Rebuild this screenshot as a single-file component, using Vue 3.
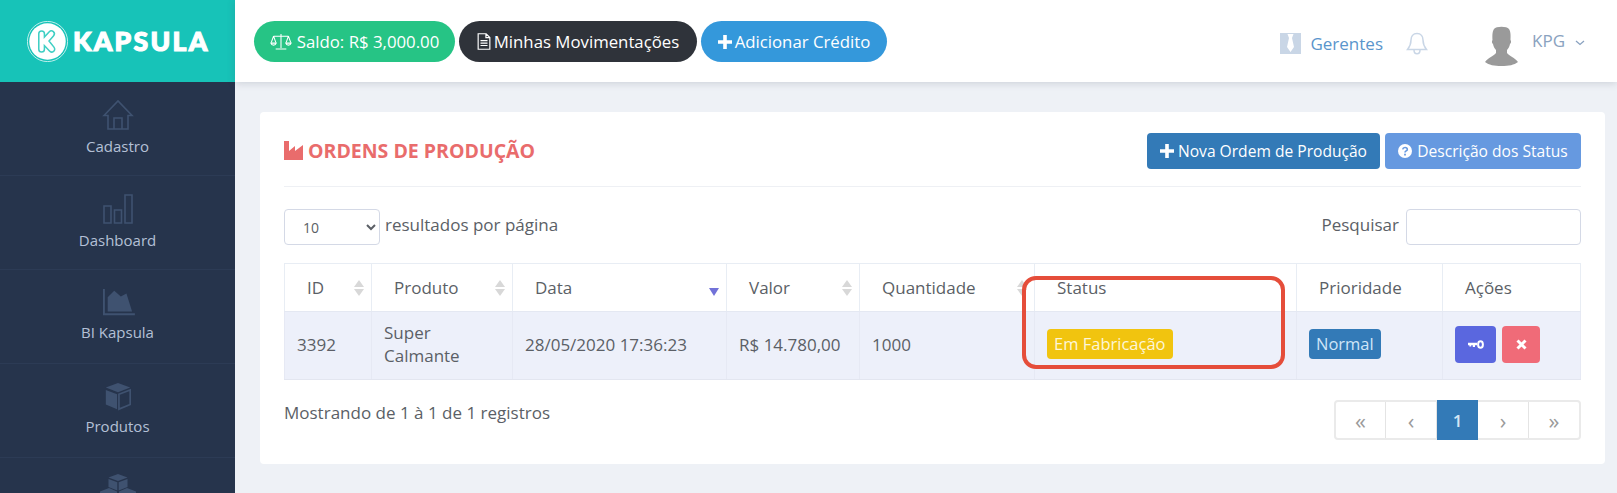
<template>
  <div class="layout">
    <aside class="sidebar">
      <div class="brand">
        <svg class="brand-mark" viewBox="0 0 40 40">
          <circle cx="20" cy="20" r="19.600" fill="none" stroke="#fff" stroke-width="0.700" />
          <circle cx="20" cy="20" r="17.800" fill="#fff" />
          <path d="M11.500 12.500c0-3.600 5.500-3.600 5.500 0v3.200l4.500-5c2.800-2.800 7 .8 4.300 3.900L21.500 19.500l4.800 6c2.500 3.200-2 6.500-4.600 3.600L17 24v3.500c0 3.600-5.500 3.600-5.500 0z" fill="#fff" stroke="#3fcfc4" stroke-width="1.500" />
        </svg>
        <span class="brand-name">KAPSULA</span>
      </div>
      <nav class="menu">
        <a v-for="item in menu" :key="item.key" class="menu-item">
          <svg class="menu-icon" viewBox="0 0 32 32" :style="{ height: item.size + 'px' }" v-html="item.icon"></svg>
          <span v-if="item.label">{{ item.label }}</span>
        </a>
      </nav>
    </aside>

    <div class="main">
      <header class="topbar">
        <div class="pills">
          <a class="pill pill-green">
            <svg class="ico-scale" viewBox="0 0 20 16" fill="none" stroke="#fff" stroke-width="1">
              <path d="M10 1v13M5 15h10M3 3h14M3 3L.8 9M3 3l2.200 6M17 3l-2.200 6M17 3l2.200 6" />
              <path d="M.5 9.500a2.600 2.600 0 0 0 5 0zM14.500 9.500a2.600 2.600 0 0 0 5 0z" />
            </svg>
            Saldo: R$ 3,000.00
          </a>
          <a class="pill pill-dark">
            <svg class="ico-file" viewBox="0 0 13 16" fill="none" stroke="#fff" stroke-width="1.100">
              <path d="M1 .7h7.500L12 4.200v11.100H1zM8.300 .8v3.600H12M3.200 7.200h6.600M3.200 9.500h6.600M3.200 11.800h6.600" />
            </svg>
            Minhas Movimentações
          </a>
          <a class="pill pill-blue">
            <svg class="ico-plus" viewBox="0 0 14 14"><path d="M5.200 0h3.600v5.200H14v3.600H8.800V14H5.200V8.800H0V5.200h5.200z" fill="#fff" /></svg>
            Adicionar Crédito
          </a>
        </div>
        <div class="top-right">
          <a class="managers">
            <svg class="ico-tie" viewBox="0 0 21 21">
              <rect width="21" height="21" fill="#c9d6e6" />
              <path d="M7.500 1h6l-1.500 4 2 9-3.500 5L7 14l2-9z" fill="#fff" />
            </svg>
            Gerentes
          </a>
          <svg class="ico-bell" viewBox="0 0 22 23" fill="none" stroke="#c9d6e6" stroke-width="1.500">
            <path d="M11 1.500c-4 0-6 3-6 6.500 0 5-1.500 7-3.500 9.500h19C18.500 15 17 13 17 8c0-3.500-2-6.500-6-6.500zM8 18c0 2.500 1.500 3.800 3 3.800s3-1.300 3-3.800" />
          </svg>
          <a class="user">
            <svg class="avatar" viewBox="0 0 33 40">
              <path d="M9 3c2-3 13-3 15 0 2 3 1.600 8 1.500 11 1 1 .6 3.500-.5 4-.5 3-2 5-3 6v3c2 2.500 8 5 11 9-4 3-9 4-16.500 4S4 39 0 36c3-4 9-6.500 11-9v-3c-1-1-2.500-3-3-6-1.100-.5-1.500-3-.5-4C7.400 11 7 6 9 3z" fill="#9a9a9a" />
            </svg>
            <span class="user-name">KPG</span>
            <svg class="ico-chevron" viewBox="0 0 10 6" fill="none" stroke="#8aa2c0" stroke-width="1.300"><path d="M1 1l4 3.500L9 1" /></svg>
          </a>
        </div>
      </header>

      <section class="content">
        <div class="card">
          <div class="card-head">
            <h2 class="card-title">
              <svg class="ico-industry" viewBox="0 0 19 19"><path d="M0 0h5v10l6-5v5l8-6v15H0z" fill="#e96c6c" /></svg>
              ORDENS DE PRODUÇÃO
            </h2>
            <div class="head-actions">
              <a class="btn btn-primary">
                <svg class="ico-plus" viewBox="0 0 14 14"><path d="M5.200 0h3.600v5.200H14v3.600H8.800V14H5.200V8.800H0V5.200h5.200z" fill="#fff" /></svg>
                Nova Ordem de Produção
              </a>
              <a class="btn btn-info">
                <svg class="ico-help" viewBox="0 0 14 14">
                  <circle cx="7" cy="7" r="7" fill="#fff" />
                  <path d="M4.700 5.400c.2-1.300 1.100-1.900 2.300-1.900s2.300.8 2.300 1.900c0 1.600-2.300 1.500-2.300 3.200" fill="none" stroke="#6699e0" stroke-width="1.600" />
                  <rect x="6.100" y="9.700" width="1.800" height="1.800" fill="#6699e0" />
                </svg>
                Descrição dos Status
              </a>
            </div>
          </div>

          <div class="filters">
            <label class="page-size">
              <select class="size-select">
                <option>10</option>
              </select>
              resultados por página
            </label>
            <label class="search">
              Pesquisar
              <input class="search-input" type="text" />
            </label>
          </div>

          <div class="table-wrap">
            <table class="orders">
              <colgroup>
                <col v-for="col in columns" :key="col.label" :style="{ width: col.width + 'px' }" />
              </colgroup>
              <thead>
                <tr>
                  <th v-for="col in columns" :key="col.label">
                    {{ col.label }}
                    <span v-if="col.sort" class="sort">
                      <i class="up"></i><i class="down"></i>
                    </span>
                    <i v-if="col.active" class="sort-active"></i>
                  </th>
                </tr>
              </thead>
              <tbody>
                <tr>
                  <td>3392</td>
                  <td>Super<br />Calmante</td>
                  <td>28/05/2020 17:36:23</td>
                  <td>R$ 14.780,00</td>
                  <td>1000</td>
                  <td><span class="badge badge-yellow">Em Fabricação</span></td>
                  <td><span class="badge badge-blue">Normal</span></td>
                  <td>
                    <div class="row-actions">
                      <a class="act act-key">
                        <svg viewBox="0 0 16 9" width="16" height="9">
                          <path d="M0 2.800h9v2.400H7v1.800H4.800V5.200H3.200v1.300H1.400V5.200H0z" fill="#fff" />
                          <ellipse cx="12.500" cy="4.500" rx="2.400" ry="3.300" fill="none" stroke="#fff" stroke-width="2" />
                        </svg>
                      </a>
                      <a class="act act-del">
                        <svg viewBox="0 0 11 11" width="11" height="11">
                          <path d="M1.500 1.500l8 8M9.500 1.500l-8 8" stroke="#fff" stroke-width="3" />
                        </svg>
                      </a>
                    </div>
                  </td>
                </tr>
              </tbody>
            </table>
            <div class="highlight"></div>
          </div>

          <div class="table-foot">
            <span class="info">Mostrando de 1 à 1 de 1 registros</span>
            <div class="pager">
              <a class="wide">«</a>
              <a>‹</a>
              <a class="current">1</a>
              <a>›</a>
              <a class="wide last">»</a>
            </div>
          </div>
        </div>
      </section>
    </div>
  </div>
</template>

<script setup>
const stroke = 'fill="none" stroke="#3f5270" stroke-width="1.600"'

const menu = [
  { key: 'cadastro', label: 'Cadastro', size: 32, icon: `<path ${stroke} d="M2 16.500L16 2l14 14.500h-4V30H6V16.500zM12 30V19h8v11" />` },
  { key: 'dashboard', label: 'Dashboard', size: 32, icon: `<path ${stroke} d="M2 13h7v17H2zM12.500 17h7v13h-7zM23 2h7v28h-7z" />` },
  { key: 'bi', label: 'BI Kapsula', size: 30, icon: '<path d="M0 2h2v26h32v2H0z" fill="#3f5270" /><path d="M5 26V11l7-7 7 6 6-3 6 19z" fill="#3f5270" />' },
  { key: 'produtos', label: 'Produtos', size: 30, icon: '<path d="M16 2l13 5-13 5L3 7z M3 9.500l12 4.700V30L3 25z" fill="#3f5270" /><path d="M17 14.200l12-4.700V25l-12 5z" fill="none" stroke="#3f5270" stroke-width="1.800" />' },
  // only the top of this icon fits in the window, its label is below the fold
  { key: 'estoque', label: '', size: 32, icon: '<path d="M16-1l9.500 3.500L16 6 6.500 2.500zM6.500 4l8.800 3.300V15.500L6.500 12zM25.500 4l-8.800 3.300V15.500l8.800-3.500z" fill="#3f5270" /><path d="M7 13l8 3.500V28l-8 3-9-3V16.500zM25 13l9 3.500V28l-9 3-8-3V16.500z" fill="#3f5270" />' }
]

const columns = [
  { label: 'ID', width: 87, sort: true },
  { label: 'Produto', width: 141, sort: true },
  { label: 'Data', width: 214, active: true },
  { label: 'Valor', width: 133, sort: true },
  { label: 'Quantidade', width: 175, sort: true },
  { label: 'Status', width: 262 },
  { label: 'Prioridade', width: 146 },
  { label: 'Ações', width: 138 }
]
</script>

<style>
html,
body {
  margin: 0;
  background: #eef1f6;
  overflow: hidden;
}
</style>

<style scoped>
.layout {
  display: flex;
  width: 1617px;
  height: 493px;
  overflow: hidden;
  background: #eef1f6;
  font-family: "Open Sans", "Noto Sans", sans-serif;
  font-size: 17px;
  color: #5b5f66;
}

a {
  text-decoration: none;
}

/* sidebar */
.sidebar {
  flex: 0 0 235px;
  background: #26344c;
  overflow: hidden;
}

.brand {
  display: flex;
  align-items: center;
  gap: 5px;
  box-sizing: border-box;
  height: 82px;
  padding-left: 27px;
  background: #17c3b8;
}

.brand-mark {
  width: 41px;
  height: 41px;
}

.brand-name {
  font-family: "Lato", "Open Sans", sans-serif;
  font-size: 26.500px;
  font-weight: 900;
  letter-spacing: 2.300px;
  color: #fff;
  -webkit-text-stroke: 1.200px #fff;
}

.menu-item {
  display: flex;
  flex-direction: column;
  align-items: center;
  gap: 5px;
  box-sizing: border-box;
  height: 94px;
  padding-top: 17px;
  border-bottom: 1px solid #2c3b55;
  font-size: 15px;
  color: #b4c0d6;
}

.menu-icon {
  width: 32px;
  overflow: visible;
}

/* topbar */
.main {
  flex: 1;
  min-width: 0;
}

.topbar {
  position: relative;
  display: flex;
  align-items: flex-start;
  justify-content: space-between;
  box-sizing: border-box;
  height: 82px;
  padding: 21px 32px 0 19px;
  background: #fff;
  box-shadow: 0 1px 8px rgba(60, 70, 90, 0.2);
}

.pills {
  display: flex;
  gap: 4px;
}

.pill {
  display: flex;
  align-items: center;
  justify-content: center;
  box-sizing: border-box;
  height: 41px;
  border-radius: 21px;
  font-size: 16.800px;
  font-weight: 500;
  color: #fff;
  white-space: nowrap;
}

.pill-green {
  width: 201px;
  gap: 5px;
  background: #26c485;
}

.pill-dark {
  width: 238px;
  gap: 3px;
  background: #2f333a;
}

.pill-blue {
  width: 186px;
  gap: 3px;
  background: #3498db;
}

.ico-scale {
  width: 22px;
  height: 17px;
}

.ico-file {
  width: 14px;
  height: 17px;
}

.ico-plus {
  width: 14px;
  height: 14px;
}

.top-right {
  display: flex;
  align-items: flex-start;
}

.managers {
  display: flex;
  align-items: center;
  gap: 9px;
  margin-top: 11px;
  font-size: 17px;
  color: #5a95cc;
}

.ico-tie {
  width: 21px;
  height: 21px;
}

.ico-bell {
  width: 22px;
  height: 23px;
  margin: 11px 0 0 23px;
}

.user {
  display: flex;
  align-items: flex-start;
  margin-left: 57px;
  margin-top: 5px;
}

.avatar {
  width: 33px;
  height: 40px;
}

.user-name {
  margin: 3px 0 0 14px;
  font-size: 17px;
  color: #8aa2c0;
}

.ico-chevron {
  width: 10px;
  height: 6px;
  margin: 14px 0 0 10px;
}

/* card */
.content {
  padding: 30px 12px 0 25px;
}

.card {
  box-sizing: border-box;
  height: 352px;
  padding: 21px 24px 0;
  background: #fff;
  border-radius: 4px;
}

.card-head {
  display: flex;
  justify-content: space-between;
  height: 53px;
  border-bottom: 1px solid #eef0f4;
}

.card-title {
  display: flex;
  align-items: center;
  gap: 5px;
  height: 34px;
  margin: 0;
  font-size: 19.500px;
  font-weight: 700;
  color: #e96c6c;
}

.ico-industry {
  width: 19px;
  height: 19px;
}

.head-actions {
  display: flex;
  gap: 5px;
}

.btn {
  display: flex;
  align-items: center;
  justify-content: center;
  gap: 4px;
  box-sizing: border-box;
  height: 36px;
  padding-bottom: 1px;
  border-radius: 4px;
  font-size: 15.600px;
  font-weight: 400;
  color: #fff;
  white-space: nowrap;
}

.btn-primary {
  width: 233px;
  background: #337ab7;
}

.btn-info {
  width: 196px;
  background: #6699e0;
}

.ico-help {
  width: 14px;
  height: 14px;
  margin-right: 1px;
}

.filters {
  display: flex;
  justify-content: space-between;
  margin-top: 22px;
  height: 36px;
}

.page-size,
.search {
  display: flex;
  align-items: flex-start;
  gap: 5px;
  line-height: 32px;
}

.search {
  gap: 7px;
}

.size-select {
  box-sizing: border-box;
  width: 96px;
  height: 36px;
  padding-left: 14px;
  background: #fff;
  border: 1px solid #d4d9e6;
  border-radius: 4px;
  font-family: inherit;
  font-size: 14px;
  color: #5b5f66;
}

.search-input {
  box-sizing: border-box;
  width: 175px;
  height: 36px;
  border: 1px solid #d4d9e6;
  border-radius: 4px;
  background: #fff;
}

.table-wrap {
  position: relative;
  margin-top: 18px;
}

.orders {
  width: 1296px;
  table-layout: fixed;
  border-collapse: collapse;
}

.orders th {
  position: relative;
  box-sizing: border-box;
  height: 48px;
  padding: 0 22px;
  border: 1px solid #e8edf4;
  border-bottom: 1px solid #e4e8f2;
  text-align: left;
  font-weight: 400;
  color: #5b5f66;
  white-space: nowrap;
}

.orders td {
  box-sizing: border-box;
  height: 68px;
  padding: 0 12px 3px;
  border: 1px solid #e6e9f4;
  border-bottom: 1px solid #e3e6f0;
  background: #edf0fa;
  line-height: 23px;
}

.sort {
  position: absolute;
  top: 16px;
  right: 7px;
  display: flex;
  flex-direction: column;
  gap: 2px;
}

.sort i {
  display: block;
  width: 0;
  height: 0;
  border-left: 5px solid transparent;
  border-right: 5px solid transparent;
}

.sort .up {
  border-bottom: 7px solid #d8d8d8;
}

.sort .down {
  border-top: 7px solid #d8d8d8;
}

.sort-active {
  position: absolute;
  right: 7px;
  top: 24px;
  width: 0;
  height: 0;
  border-left: 5px solid transparent;
  border-right: 5px solid transparent;
  border-top: 8px solid #7272d8;
}

.badge {
  display: inline-block;
  height: 30px;
  padding: 0 7px;
  border-radius: 4px;
  font-size: 16.500px;
  line-height: 30px;
  color: #fff;
}

.badge-yellow {
  background: #f1c40f;
  color: #fdf6d8;
}

.badge-blue {
  background: #337ab7;
  color: #cfe5f7;
}

.row-actions {
  display: flex;
  gap: 6px;
}

.act {
  display: flex;
  align-items: center;
  justify-content: center;
  height: 37px;
  border-radius: 4px;
}

.act-key {
  width: 41px;
  background: #5a67df;
}

.act-del {
  width: 38px;
  background: #f06b78;
}

.highlight {
  position: absolute;
  left: 738px;
  top: 13px;
  width: 263px;
  height: 93px;
  box-sizing: border-box;
  border: 4px solid #e54d3a;
  border-radius: 14px;
  pointer-events: none;
}

.table-foot {
  display: flex;
  justify-content: space-between;
  margin-top: 20px;
}

.info {
  line-height: 26px;
}

.pager {
  display: flex;
  box-sizing: border-box;
  height: 40px;
  border: 2px solid #eaeaea;
  border-radius: 4px;
  overflow: visible;
}

.pager a {
  display: flex;
  align-items: center;
  justify-content: center;
  box-sizing: border-box;
  width: 51px;
  border-right: 1px solid #e4e4e4;
  font-size: 22px;
  line-height: 1;
  color: #9a9a9a;
}

.pager a.wide {
  width: 50px;
}

.pager a.last {
  border-right: none;
}

.pager a.current {
  width: 41px;
  margin: -2px 0;
  background: #337ab7;
  color: #d5e6f5;
  font-size: 17px;
  font-weight: 600;
  border-right: none;
}
</style>
